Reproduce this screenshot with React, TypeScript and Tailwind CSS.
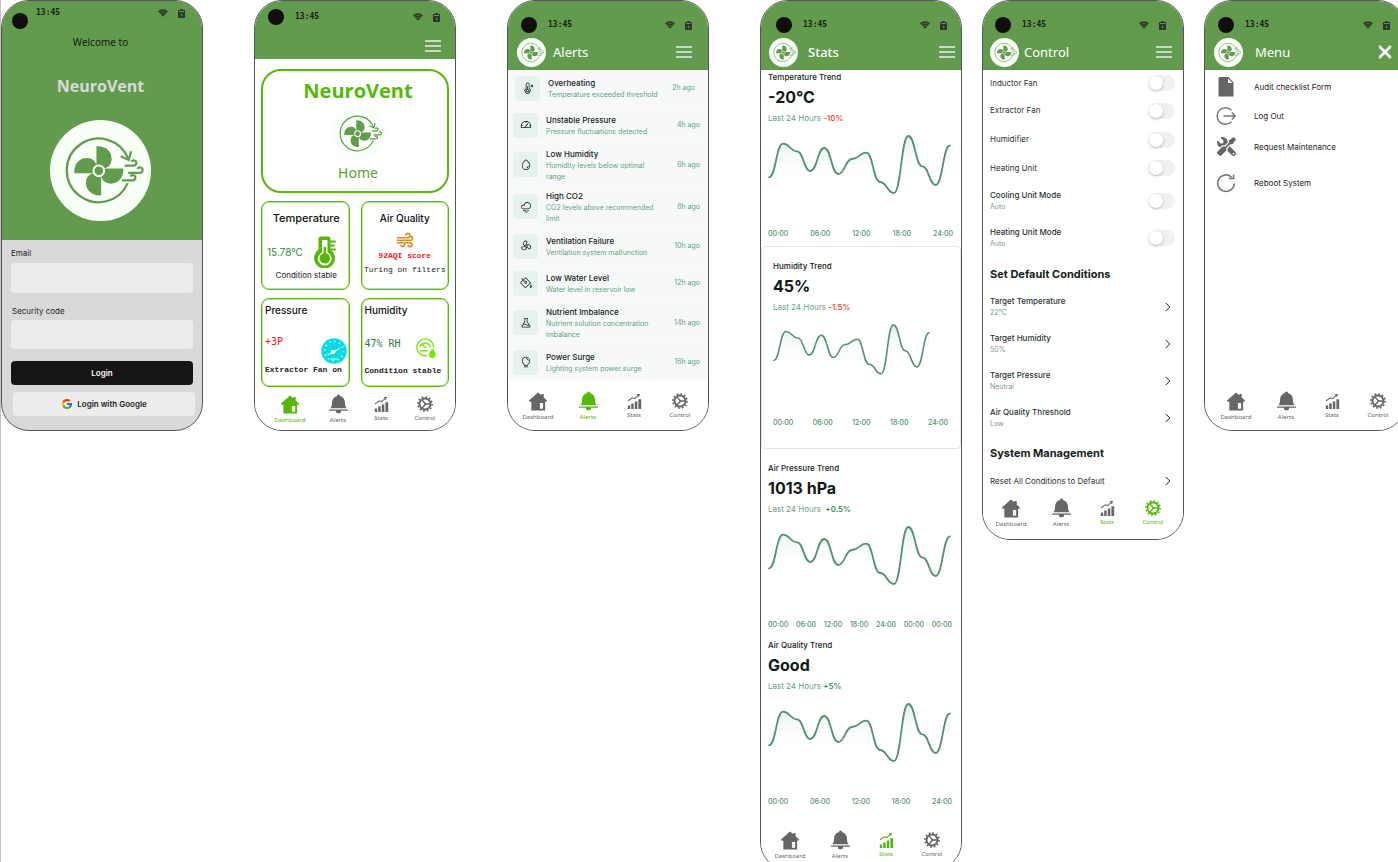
import type { ReactNode } from "react";
import { FcGoogle } from "react-icons/fc";
import { FaTools } from "react-icons/fa";
import {
  PiThermometer,
  PiGauge,
  PiDrop,
  PiCloudFog,
  PiFan,
  PiPaintBucket,
  PiFlask,
  PiLightbulb,
} from "react-icons/pi";

/* ---------- shared drawings ---------- */

function Logo({ className }: { className: string }) {
  return (
    <svg viewBox="0 0 100 100" className={className} aria-hidden="true">
      <circle cx="50" cy="50" r="50" fill="#f8fff7" />
      <g fill="none" stroke="#629b4e" strokeWidth="2.2">
        <path d="M77.5 38.5A31.5 31.5 0 1 0 77 62.500" />
        <path d="M70 36l8 3.600L80.200 31" />
        <path d="M74 45.200h9a2.600 2.600 0 1 0-2.400-3.800" />
        <path d="M77.500 52.400h11.500a2.800 2.800 0 1 0-2.500-4.200" />
        <path d="M71 59.800h11a2.600 2.600 0 1 0-2.400-3.800" />
      </g>
      <g fill="#629b4e">
        {[0, 90, 180, 270].map((a) => (
          <path
            key={a}
            transform={`rotate(${a} 48.300 50.300)`}
            d="M46 26C55 25.500 61 31 61 38.500C61 42 59.500 45 57 46.600L48.300 50.300L46 45Z"
          />
        ))}
        <circle cx="48.300" cy="50.300" r="5.300" stroke="#f8fff7" strokeWidth="2" />
      </g>
    </svg>
  );
}

function WifiIcon() {
  return (
    <svg viewBox="0 0 24 18" className="h-2 w-2.5" aria-hidden="true">
      <path d="M12 0C7.300 0 3 1.900 0 5l12 13L24 5C21 1.900 16.700 0 12 0z" fill="#2c3a28" />
      <path d="M3.500 8.200a12 12 0 0 1 17 0M7 12a7.500 7.500 0 0 1 10 0" stroke="#629b4e" strokeWidth="1.200" fill="none" />
    </svg>
  );
}

function BatteryIcon() {
  return (
    <svg viewBox="0 0 14 18" className="h-[9px] w-[7px]" aria-hidden="true">
      <path d="M4.500 0h5v2h3A1.500 1.500 0 0 1 14 3.500v13a1.500 1.500 0 0 1-1.500 1.500h-11A1.500 1.500 0 0 1 0 16.500v-13A1.500 1.500 0 0 1 1.500 2h3z" fill="#2c3530" />
      <path d="M2 3.800h10v2H2zM7.500 8.500l-2.500 4h2v3l3-4.200H8z" fill="#629b4e" />
    </svg>
  );
}

function StatusBar({ className }: { className: string }) {
  return (
    <div className={`flex items-center ${className}`}>
      <span className="size-4 shrink-0 rounded-full bg-[#130e0e]" />
      <time className="ml-[11px] font-['DejaVu_Sans_Mono',monospace] text-[8px] font-bold leading-3 text-[#1b210f]">13:45</time>
      <span className="ml-auto flex items-center gap-2.5">
        <WifiIcon />
        <BatteryIcon />
      </span>
    </div>
  );
}

function Hamburger() {
  return (
    <button type="button" aria-label="Open menu" className="flex h-3 w-4 flex-col justify-between">
      <span className="h-0.5 w-full bg-white/65" />
      <span className="h-0.5 w-full bg-white/65" />
      <span className="h-0.5 w-full bg-white/65" />
    </button>
  );
}

function Header({
  title,
  status,
  bar,
  titleClass,
  action,
}: {
  title: string;
  status: string;
  bar: string;
  titleClass: string;
  action: ReactNode;
}) {
  return (
    <header className="h-[69px] bg-[#629b4e]">
      <StatusBar className={`h-[33px] pt-[15px] ${status}`} />
      <div className={`flex h-9 items-center ${bar}`}>
        <Logo className="size-[29px] shrink-0" />
        <h1 className={`font-['Noto_Sans',sans-serif] text-[13px] leading-4 text-white ${titleClass}`}>{title}</h1>
        <div className="ml-auto flex items-center">{action}</div>
      </div>
    </header>
  );
}

function HouseIcon() {
  return (
    <svg viewBox="0 0 20 20" className="h-[19px] w-5" fill="currentColor" aria-hidden="true">
      <path d="M10 .5l3.500 3V2h2.500v3.700l3.500 3.300-.8 1.300H17.500V19.500H3V10.300H1.200L.5 9z" />
      <path d="M12 11.500h3.400v6H12z" fill="#fff" />
    </svg>
  );
}

function BellIcon() {
  return (
    <svg viewBox="0 0 20 20" className="h-5 w-[19px]" fill="currentColor" aria-hidden="true">
      <path d="M10 0a1.600 1.600 0 0 1 1.600 1.700C15 2.600 16.800 5.200 16.800 8.500c0 3.500.7 4.700 1.700 6H1.500c1-1.300 1.700-2.500 1.700-6 0-3.300 1.800-5.900 5.200-6.800A1.600 1.600 0 0 1 10 0z" />
      <path d="M0 15.800h20v1.300H0zM7.200 17h5.600A2.800 2.800 0 0 1 7.200 17z" />
    </svg>
  );
}

function BarsIcon() {
  return (
    <svg viewBox="0 0 15 16" className="h-4 w-[15px]" fill="currentColor" aria-hidden="true">
      <path d="M.8 12.500h2.400V16H.8zM4.200 10.500h2.500V16H4.200zM7.800 8.500h2.500V16H7.800zM11.400 6.200h2.800V16h-2.800z" />
      <path d="M1 7.800L5.500 4.800l2 .8L11.500 2.400" stroke="currentColor" fill="none" strokeWidth="1.200" />
      <path d="M9.600 1h3.400l-1 3.200z" />
    </svg>
  );
}

function GearIcon() {
  return (
    <svg viewBox="0 0 24 24" className="size-4" fill="none" stroke="currentColor" aria-hidden="true">
      <circle cx="12" cy="12" r="8.200" strokeWidth="2.800" />
      <circle cx="12" cy="12" r="10.600" strokeWidth="2.400" strokeDasharray="2.800 2.750" />
      <path d="M13 12l-5.500-6M13 12l-5.500 6M12.500 12H20" strokeWidth="1.900" />
      <circle cx="12.200" cy="12" r="1.600" fill="currentColor" stroke="none" />
    </svg>
  );
}

const WIDE_NAV = ["w-[50px] pb-[9px]", "w-[50px] pb-[9px]", "w-[42px] pb-[11px]", "w-[50px] pb-[11px]"];
const COMPACT_NAV = ["w-12 pb-1.5", "w-12 pb-1.5", "w-[38px] pb-2", "w-[50px] pb-2"];

function BottomNav({
  active,
  className,
  cells = WIDE_NAV,
}: {
  active: string[];
  className: string;
  cells?: string[];
}) {
  const items = [
    { name: "Dashboard", icon: <HouseIcon /> },
    { name: "Alerts", icon: <BellIcon /> },
    { name: "Stats", icon: <BarsIcon /> },
    { name: "Control", icon: <GearIcon /> },
  ];
  return (
    <nav className={`flex items-end bg-white ${className}`}>
      {items.map((it, i) => (
        <a
          key={it.name}
          href="#"
          className={`flex flex-col items-center gap-0.5 font-['Noto_Sans',sans-serif] text-[6px] leading-2 ${cells[i]} ${
            active.includes(it.name) ? "text-[#55b80b]" : "text-[#666666]"
          }`}
        >
          <span className={active.includes("Control") && it.name === "Stats" ? "text-[#666666]" : ""}>{it.icon}</span>
          {it.name}
        </a>
      ))}
    </nav>
  );
}

function Phone({ children }: { children: ReactNode }) {
  return (
    <section className="w-[202px] shrink-0 overflow-hidden rounded-[28px] border border-[#555] bg-white">
      {children}
    </section>
  );
}

/* ---------- login ---------- */

function LoginScreen() {
  return (
    <section className="w-[202px] shrink-0 overflow-hidden rounded-[28px] border border-[#555] bg-[#d9d9d9]">
      <header className="flex h-[239px] flex-col bg-[#629b4e] pr-[3px]">
        <div className="flex h-[30px] items-start pl-2.5 pr-3.5 pt-1.5">
          <span className="mt-1.5 size-4 shrink-0 rounded-full bg-[#130e0e]" />
          <time className="ml-2 font-['DejaVu_Sans_Mono',monospace] text-[8px] font-bold leading-3 text-[#1b210f]">13:45</time>
          <span className="ml-auto flex h-3 items-center gap-2.5">
            <WifiIcon />
            <BatteryIcon />
          </span>
        </div>
        <p className="mt-[3px] text-center font-['Noto_Sans',sans-serif] text-[10px] leading-4 text-[#141c10]">Welcome to</p>
        <h1 className="mt-6 text-center font-['Open_Sans',sans-serif] text-[16px] font-bold leading-6 text-[#d9d9d9]">NeuroVent</h1>
        <Logo className="mt-[22px] size-[101px] self-center" />
      </header>
      <form className="flex flex-col px-[9px] pb-3.5 pt-[7px] text-[#222]" onSubmit={(e) => e.preventDefault()}>
        <label htmlFor="email" className="text-[8px] leading-3">Email</label>
        <input id="email" type="email" className="mt-1 h-[30px] w-full rounded-[4px] bg-[#ececec] px-2 text-[8px]" />
        <label htmlFor="code" className="mt-3 pl-px text-[8px] leading-3">Security code</label>
        <input id="code" type="password" className="mt-[3px] h-[29px] w-full rounded-[4px] bg-[#ececec] px-2 text-[8px]" />
        <button type="submit" className="mt-3 h-6 rounded-[4px] bg-[#151515] text-[8px] font-semibold leading-3 text-white">Login</button>
        <button type="button" className="-mr-0.5 ml-0.5 mt-[7px] flex h-6 items-center justify-center gap-1 rounded-[4px] bg-[#ececec] text-[8px] font-semibold leading-3">
          <FcGoogle className="size-3" />
          Login with Google
        </button>
      </form>
    </section>
  );
}

/* ---------- dashboard ---------- */

function ThermometerDrawing() {
  return (
    <svg viewBox="0 0 24 32" className="h-8 w-6" aria-hidden="true">
      <path d="M5.500 13.500V3A2.500 2.500 0 0 1 8 .5h7A2.500 2.500 0 0 1 17.500 3v10.500a10.500 10.500 0 1 1-12 0z" fill="#55b80b" />
      <path d="M9 4h5.500v12.500a6.800 6.800 0 1 1-5.500 0z" fill="#fff" />
      <path d="M11.800 11v12" stroke="#55b80b" strokeWidth="2.400" />
      <circle cx="11.800" cy="22.300" r="5.200" fill="#55b80b" />
      <path d="M17 5.500h5M17 9.500h4M17 13.500h5" stroke="#55b80b" strokeWidth="2" strokeLinecap="round" />
    </svg>
  );
}

function WindDrawing() {
  return (
    <svg viewBox="0 0 18 16" className="h-4 w-[18px]" fill="none" stroke="#dd8a28" strokeWidth="1.600" strokeLinecap="round" aria-hidden="true">
      <path d="M1.500 5.800h10.300a2.200 2.200 0 1 0-2.100-2.900" />
      <path d="M1.500 8.200h13.200a1.900 1.900 0 1 0-1-3.500" />
      <path d="M1.500 10.700h5.300a1.900 1.900 0 1 1-1.800 2.600" />
      <path d="M9 10.700h5a2 2 0 1 1-1.800 2.700" />
    </svg>
  );
}

function PressureDrawing() {
  return (
    <svg viewBox="0 0 26 26" className="size-[26px]" aria-hidden="true">
      <circle cx="13" cy="13" r="12.800" fill="#09dbe6" />
      <circle cx="13" cy="13" r="9.500" fill="none" stroke="#e8ffff" strokeWidth="1.600" strokeDasharray="1.300 3.670" />
      <path d="M4.500 17.500L21.500 8.500 12 15.800z" fill="#fff" />
      <circle cx="12" cy="14" r="2.200" fill="#fff" />
      <path d="M9.500 21h7" stroke="#fff" strokeWidth="1.200" />
    </svg>
  );
}

function HumidityDrawing() {
  return (
    <svg viewBox="0 0 20 20" className="size-5" aria-hidden="true">
      <g fill="none" stroke="#78e50c" strokeWidth="1.400" strokeLinecap="round">
        <path d="M10.500 17.600A8.400 8.400 0 1 1 17.600 9" />
        <path d="M4 8.600a5.500 5.500 0 0 1 10.200.2M9.800 9.800L6.500 6.800M4.500 12.800h7" />
      </g>
      <path d="M16.400 10.500c2 2.400 3.400 4.300 3.400 6a3.400 3.400 0 0 1-6.800 0c0-1.700 1.400-3.600 3.400-6z" fill="#78e50c" />
    </svg>
  );
}

const MONO = "font-['Liberation_Mono',monospace] whitespace-nowrap text-[8px] leading-3";
const READING = "font-['DejaVu_Sans_Mono',monospace] text-[10px] leading-4";
const TILE = "flex h-[89px] flex-col rounded-[8px] border border-[#55b80b] outline-1 -outline-offset-2 outline-[#55b80b]/40";

function DashboardScreen() {
  return (
    <Phone>
      <header className="h-[58px] bg-[#629b4e]">
        <StatusBar className="h-8 pl-[13px] pr-[15px]" />
        <div className="flex justify-end pr-3.5 pt-[7px]">
          <Hamburger />
        </div>
      </header>
      <div className="px-1.5 pt-2.5">
        <section className="flex h-[124px] flex-col items-center rounded-[20px] border-2 border-[#55b80b] pl-1.5">
          <h1 className="mt-2 font-['Open_Sans',sans-serif] text-[20px] font-bold leading-6 text-[#55b80b]">NeuroVent</h1>
          <Logo className="mt-[3px] size-[55px]" />
          <p className="mt-1 font-['Noto_Sans',sans-serif] text-[14px] leading-4 text-[#55a52c]">Home</p>
        </section>
        <div className="mt-2 grid grid-cols-2 gap-x-[11px] gap-y-2">
          <article className={TILE}>
            <h2 className="pl-0.5 pt-2 text-center text-[11px] font-medium leading-4 text-[#111]">Temperature</h2>
            <div className="flex h-[43px] items-center justify-between pl-[5px] pr-3 pt-2">
              <span className="text-[10px] leading-3 text-[#2b8a3e]">15.78°C</span>
              <ThermometerDrawing />
            </div>
            <p className="whitespace-nowrap pl-0.5 text-center text-[8px] leading-3 text-[#222]">Condition stable</p>
          </article>
          <article className={`items-center ${TILE}`}>
            <h2 className="pt-2 text-[10px] font-medium leading-4 text-[#111]">Air Quality</h2>
            <div className="flex h-6 items-center pt-1">
              <WindDrawing />
            </div>
            <p className={`font-bold text-[#f42020] ${MONO}`}>92AQI score</p>
            <p className={`mt-0.5 text-[#222] ${MONO}`}>Turing on filters</p>
          </article>
          <article className={`pl-[3px] ${TILE}`}>
            <h2 className="pt-[3px] text-[10px] font-medium leading-4 text-[#111]">Pressure</h2>
            <div className="flex h-[46px] items-end justify-between pr-0.5">
              <span className={`pb-3.5 text-[#f42020] ${READING}`}>+3P</span>
              <PressureDrawing />
            </div>
            <p className={`font-bold text-[#222] ${MONO}`}>Extractor Fan on</p>
          </article>
          <article className={`pl-[3px] ${TILE}`}>
            <h2 className="pt-[3px] text-[10px] font-medium leading-4 text-[#111]">Humidity</h2>
            <div className="flex h-[47px] items-end justify-between pb-[7px] pr-3">
              <span className={`pb-1.5 text-[#2f7d43] ${READING}`}>47% RH</span>
              <HumidityDrawing />
            </div>
            <p className={`font-bold text-[#222] ${MONO}`}>Condition stable</p>
          </article>
        </div>
      </div>
      <BottomNav active={["Dashboard"]} className="h-[43px] pl-[11px]" cells={COMPACT_NAV} />
    </Phone>
  );
}

/* ---------- alerts ---------- */

const ALERTS = [
  { icon: PiThermometer, title: "Overheating", text: "Temperature exceeded threshold", time: "2h ago", row: "h-[37px] pl-[7px] pr-[13px]" },
  { icon: PiGauge, title: "Unstable Pressure", text: "Pressure fluctuations detected", time: "4h ago", row: "h-[37px] pl-[5px] pr-2" },
  { icon: PiDrop, title: "Low Humidity", text: "Humidity levels below optimal range", time: "6h ago", row: "h-[42px] pl-[5px] pr-2" },
  { icon: PiCloudFog, title: "High CO2", text: "CO2 levels above recommended limit", time: "8h ago", row: "h-[42px] pl-[5px] pr-2" },
  { icon: PiFan, title: "Ventilation Failure", text: "Ventilation system malfunction", time: "10h ago", row: "h-[37px] pl-[5px] pr-2" },
  { icon: PiPaintBucket, title: "Low Water Level", text: "Water level in reservoir low", time: "12h ago", row: "h-[37px] pl-[5px] pr-2" },
  { icon: PiFlask, title: "Nutrient Imbalance", text: "Nutrient solution concentration imbalance", time: "14h ago", row: "h-[42px] pl-[5px] pr-2" },
  { icon: PiLightbulb, title: "Power Surge", text: "Lighting system power surge", time: "16h ago", row: "h-[37px] pl-[5px] pr-2" },
];

function AlertsScreen() {
  return (
    <Phone>
      <Header title="Alerts" status="pl-[13px] pr-4" bar="pl-[9px] pr-4" titleClass="ml-[7px]" action={<Hamburger />} />
      <ul className="bg-[#f6f9f8]">
        {ALERTS.map(({ icon: Icon, title, text, time, row }) => (
          <li key={title} className={`flex items-center border-b border-[#fafcfb] ${row}`}>
            <span className="flex size-[25px] shrink-0 items-center justify-center rounded-[4px] bg-[#e8f2ed]">
              <Icon className="size-3 text-[#14221a]" />
            </span>
            <div className="ml-2 w-[118px]">
              <h2 className="text-[8px] font-medium leading-3 text-[#14221a]">{title}</h2>
              <p className="text-[7px] leading-[11px] text-[#62a383]">{text}</p>
            </div>
            <time className="ml-auto whitespace-nowrap text-[7px] leading-3 text-[#62a383]">{time}</time>
          </li>
        ))}
      </ul>
      <BottomNav active={["Alerts"]} className="h-[49px] pl-[5px]" />
    </Phone>
  );
}

/* ---------- stats ---------- */

const POINTS: [number, number][] = [
  [1, 42.3], [15, 8.7], [29, 16.3], [42.3, 36], [56.3, 13], [70.3, 39], [84, 24],
  [98.3, 17.7], [112, 47], [126, 58], [140.3, 1], [154.3, 31.3], [167.7, 50], [182, 10.3],
];

const LINE = POINTS.map(([x, y], i) => {
  if (i === 0) return `M${x} ${y}`;
  const [px, py] = POINTS[i - 1];
  const mid = (px + x) / 2;
  return `C${mid} ${py} ${mid} ${y} ${x} ${y}`;
}).join("");

function TrendChart({ id, className }: { id: string; className: string }) {
  return (
    <svg viewBox="0 0 183 59" className={`overflow-visible ${className}`} role="img" aria-label={id}>
      <defs>
        <linearGradient id={id} x1="0" y1="0" x2="0" y2="45" gradientUnits="userSpaceOnUse">
          <stop offset="0" stopColor="#e2edea" />
          <stop offset="1" stopColor="#fff" stopOpacity="0" />
        </linearGradient>
      </defs>
      <path d={`${LINE}V59H1Z`} fill={`url(#${id})`} />
      <path d={LINE} fill="none" stroke="#529270" strokeWidth="1.800" strokeLinecap="round" />
    </svg>
  );
}

function Trend({
  id, title, value, change, up = false, hours, chart = "w-[183px]", className,
}: {
  id: string;
  title: string;
  value: string;
  change: string;
  up?: boolean;
  hours: string[];
  chart?: string;
  className: string;
}) {
  return (
    <section className={className}>
      <h2 className="text-[8px] font-medium leading-3 text-[#14221a]">{title}</h2>
      <p className="mt-0.5 text-[16px] font-bold leading-6 text-[#0f1a15]">{value}</p>
      <p className="mt-[3px] whitespace-pre text-[8px] leading-3 text-[#62a383]">
        Last 24 Hours <span className={up ? "font-medium text-[#14893b]" : "font-medium text-[#ea3323]"}>{change}</span>
      </p>
      <div className="mt-[11px] h-[93px]">
        <TrendChart id={id} className={chart} />
      </div>
      <div className="flex justify-between text-[7px] font-medium leading-3 text-[#529270]">
        {hours.map((h, i) => (
          <span key={i}>{h}</span>
        ))}
      </div>
    </section>
  );
}

const HOURS = ["00:00", "06:00", "12:00", "18:00", "24:00"];

function StatsScreen() {
  return (
    <Phone>
      <Header title="Stats" status="pl-[15px] pr-3.5" bar="pl-2 pr-1.5" titleClass="ml-2.5 font-medium" action={<Hamburger />} />
      <Trend id="temperature" title="Temperature Trend" value="-20°C" change="-10%" hours={HOURS} className="pb-1.5 pl-[7px] pr-2 pt-px" />
      <Trend
        id="humidity"
        title="Humidity Trend"
        value="45%"
        change="-1.5%"
        hours={HOURS}
        chart="w-[157px]"
        className="rounded-[4px] border border-[#dde9e6] pb-[19px] pl-[11px] pr-3 pt-[13px]"
      />
      <Trend
        id="pressure"
        title="Air Pressure Trend"
        value="1013 hPa"
        change=" +0.5%"
        up
        hours={[...HOURS, "00:00", "00:00"]}
        className="pl-[7px] pr-[9px] pt-[13px]"
      />
      <Trend id="quality" title="Air Quality Trend" value="Good" change="+5%" up hours={HOURS} className="pl-[7px] pr-[9px] pt-2" />
      <BottomNav active={["Stats"]} className="h-[61px] pl-1" />
    </Phone>
  );
}

/* ---------- control ---------- */

const SWITCHES = [
  { name: "Inductor Fan", row: "h-[26px]" },
  { name: "Extractor Fan", row: "h-[29px]" },
  { name: "Humidifier", row: "h-[29px]" },
  { name: "Heating Unit", row: "h-[28px]" },
  { name: "Cooling Unit Mode", mode: "Auto", row: "h-[37px]" },
  { name: "Heating Unit Mode", mode: "Auto", row: "h-[37px]" },
];

const TARGETS = [
  ["Target Temperature", "22°C"],
  ["Target Humidity", "50%"],
  ["Target Pressure", "Neutral"],
  ["Air Quality Threshold", "Low"],
];

function Chevron() {
  return (
    <svg viewBox="0 0 6 10" className="ml-auto mr-1 h-2.5 w-1.5" fill="none" stroke="#222" aria-hidden="true">
      <path d="M.8 1l4 4-4 4" />
    </svg>
  );
}

function ControlScreen() {
  return (
    <Phone>
      <Header title="Control" status="pl-3 pr-[17px]" bar="pl-[7px] pr-[11px]" titleClass="ml-[5px]" action={<Hamburger />} />
      <div className="pl-[7px] pr-2">
        {SWITCHES.map((s) => (
          <label key={s.name} className={`flex items-center justify-between ${s.row}`}>
            <span className="flex flex-col text-[8px] leading-[11px] text-[#2a332e]">
              <span className={s.mode ? "font-medium" : ""}>{s.name}</span>
              {s.mode && <span className="text-[7px] text-[#7d998b]">{s.mode}</span>}
            </span>
            <input
              type="checkbox"
              role="switch"
              className="h-4 w-[26px] appearance-none rounded-full bg-[#f0f2f1] before:block before:size-3.5 before:translate-y-px before:rounded-full before:bg-white before:shadow-[0_1px_3px_rgba(0,0,0,0.25)] checked:bg-[#55b80b] checked:before:translate-x-3"
            />
          </label>
        ))}
        <h2 className="flex h-8 items-center pt-1 text-[11px] font-bold leading-4 text-[#14221a]">Set Default Conditions</h2>
        {TARGETS.map(([name, value]) => (
          <button key={name} type="button" className="flex h-[37px] w-full items-center text-left">
            <span className="flex flex-col text-[8px] leading-[11px] text-[#2a332e]">
              <span className="font-medium">{name}</span>
              <span className="text-[7px] text-[#7d998b]">{value}</span>
            </span>
            <Chevron />
          </button>
        ))}
        <h2 className="flex h-[34px] items-center text-[11px] font-bold leading-4 text-[#14221a]">System Management</h2>
        <button type="button" className="flex h-[21px] w-full items-center text-left text-[8px] leading-3 text-[#2a332e]">
          Reset All Conditions to Default
          <Chevron />
        </button>
      </div>
      <BottomNav active={["Stats", "Control"]} className="h-12 pb-0.5 pl-[3px]" />
    </Phone>
  );
}

/* ---------- menu ---------- */

function FileDrawing() {
  return (
    <svg viewBox="0 0 16 20" className="h-5 w-4" aria-hidden="true">
      <path d="M1.500 0h9L15.500 5.500V19.500H0.500V1z" fill="#666" />
      <path d="M10 1.500V6h4.500z" fill="#fff" />
    </svg>
  );
}

function LogOutDrawing() {
  return (
    <svg viewBox="0 0 20 20" className="size-5" fill="none" stroke="#777" strokeWidth="1.500" aria-hidden="true">
      <path d="M15.500 4.300A8.300 8.300 0 1 0 15.500 15.700M7.500 10H19M15.800 6.500L19.200 10l-3.400 3.500" />
    </svg>
  );
}

function RebootDrawing() {
  return (
    <svg viewBox="0 0 20 20" className="size-5" fill="none" stroke="#777" strokeWidth="1.600" aria-hidden="true">
      <path d="M15.800 4.200A8.300 8.300 0 1 0 18.300 10.500M12.800 5.500h4.800V1.500" />
    </svg>
  );
}

const MENU = [
  { name: "Audit checklist Form", icon: <FileDrawing />, row: "h-[34px]" },
  { name: "Log Out", icon: <LogOutDrawing />, row: "h-6" },
  { name: "Request Maintenance", icon: <FaTools className="size-[19px] -scale-x-100 text-[#666]" />, row: "h-[37px]" },
  { name: "Reboot System", icon: <RebootDrawing />, row: "h-9" },
];

function MenuScreen() {
  return (
    <Phone>
      <Header
        title="Menu"
        status="pl-[13px] pr-[15px]"
        bar="pl-[9px] pr-[13px]"
        titleClass="ml-3"
        action={
          <button type="button" aria-label="Close menu">
            <svg viewBox="0 0 14 14" className="size-3.5" stroke="#fff" strokeWidth="2.800" strokeLinecap="round" aria-hidden="true">
              <path d="M2 2l10 10M12 2L2 12" />
            </svg>
          </button>
        }
      />
      <ul>
        {MENU.map((m) => (
          <li key={m.name}>
            <a href="#" className={`flex items-center pl-2.5 text-[8px] leading-3 text-[#2b2024] ${m.row}`}>
              <span className="flex w-[22px] justify-center">{m.icon}</span>
              <span className="ml-[17px]">{m.name}</span>
            </a>
          </li>
        ))}
      </ul>
      <BottomNav active={[]} className="h-[229px] pl-1.5" />
    </Phone>
  );
}

export default function App() {
  return (
    <main className="flex h-screen items-start overflow-hidden border-l border-[#c4c4c4] bg-white font-['Inter',sans-serif]">
      <div className="flex items-start gap-[51px]">
        <LoginScreen />
        <DashboardScreen />
        <AlertsScreen />
        <StatsScreen />
      </div>
      <div className="flex items-start gap-5 pl-5">
        <ControlScreen />
        <MenuScreen />
      </div>
    </main>
  );
}
